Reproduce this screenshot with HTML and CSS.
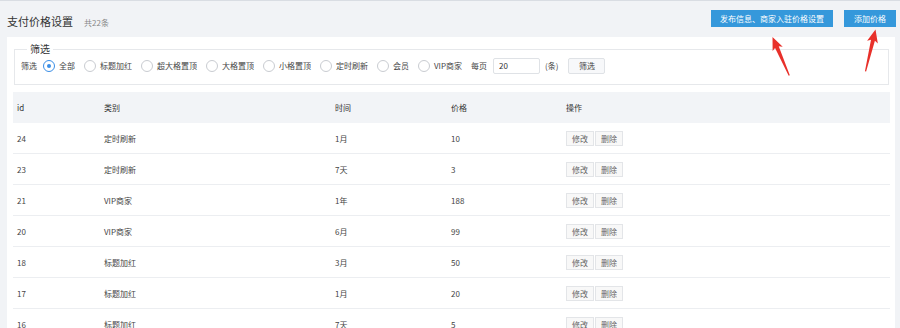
FILE: index.html
```html
<!DOCTYPE html>
<html>
<head>
  <meta charset="utf-8">
  <title>支付价格设置</title>
  <link rel="stylesheet" href="styles.css">
</head>
<body>
  <div class="topbar">
    <div class="title">
      <h1>支付价格设置</h1>
      <span class="count">共22条</span>
    </div>
    <div class="actions">
      <button class="btn-blue">发布信息、商家入驻价格设置</button>
      <button class="btn-blue">添加价格</button>
    </div>
  </div>

  <div class="panel">
    <fieldset class="filter">
      <legend>筛选</legend>
      <div class="filter-row">
        <span class="lbl">筛选</span>
        <label class="radio checked"><i></i>全部</label>
        <label class="radio"><i></i>标题加红</label>
        <label class="radio"><i></i>超大格置顶</label>
        <label class="radio"><i></i>大格置顶</label>
        <label class="radio"><i></i>小格置顶</label>
        <label class="radio"><i></i>定时刷新</label>
        <label class="radio"><i></i>会员</label>
        <label class="radio"><i></i>VIP商家</label>
        <span class="lbl per">每页</span>
        <input type="text" class="per-input" value="20">
        <span class="lbl">(条)</span>
        <button class="btn-gray">筛选</button>
      </div>
    </fieldset>

    <table class="list">
      <thead>
        <tr><th class="c-id">id</th><th class="c-type">类别</th><th class="c-time">时间</th><th class="c-price">价格</th><th>操作</th></tr>
      </thead>
      <tbody>
        <tr><td>24</td><td>定时刷新</td><td>1月</td><td>10</td><td><button class="op">修改</button><button class="op">删除</button></td></tr>
        <tr><td>23</td><td>定时刷新</td><td>7天</td><td>3</td><td><button class="op">修改</button><button class="op">删除</button></td></tr>
        <tr><td>21</td><td>VIP商家</td><td>1年</td><td>188</td><td><button class="op">修改</button><button class="op">删除</button></td></tr>
        <tr><td>20</td><td>VIP商家</td><td>6月</td><td>99</td><td><button class="op">修改</button><button class="op">删除</button></td></tr>
        <tr><td>18</td><td>标题加红</td><td>3月</td><td>50</td><td><button class="op">修改</button><button class="op">删除</button></td></tr>
        <tr><td>17</td><td>标题加红</td><td>1月</td><td>20</td><td><button class="op">修改</button><button class="op">删除</button></td></tr>
        <tr><td>16</td><td>标题加红</td><td>7天</td><td>5</td><td><button class="op">修改</button><button class="op">删除</button></td></tr>
      </tbody>
    </table>
  </div>

  <!-- annotation arrows drawn over the page -->
  <svg class="arrows" width="900" height="328" viewBox="0 0 900 328">
    <g transform="translate(772.5 37) rotate(-23.5)" fill="#e8302a">
      <polygon points="0,0 5.5,13 2,11 0.6,42 -0.6,42 -2,11 -5.5,13"/>
    </g>
    <g transform="translate(875.5 29.5) rotate(13.4)" fill="#e8302a">
      <polygon points="0,0 5.5,13 2,11 0.6,43 -0.6,43 -2,11 -5.5,13"/>
    </g>
  </svg>
</body>
</html>
```

FILE: styles.css
```css
body {
  margin: 0;
  background-color: #f1f3f6;
  border-top: 1px solid #d9dde3;
  font-family: "Noto Sans CJK SC", "Noto Sans", sans-serif;
  color: #333;
  height: 327px;
  overflow: hidden;
}

.topbar {
  display: flex;
  justify-content: space-between;
  align-items: flex-start;
  height: 36px;
  padding-left: 7px;
}

.title {
  display: flex;
  align-items: baseline;
  padding-top: 12px;
}

h1 {
  margin: 0;
  font-size: 11px;
  font-weight: normal;
  line-height: 16px;
  color: #333;
}

.count {
  margin-left: 11px;
  font-size: 8px;
  color: #888;
}

.actions {
  display: flex;
  gap: 11px;
  padding-top: 9px;
  padding-right: 4px;
}

.btn-blue {
  height: 17px;
  padding: 0 10px;
  border: none;
  background-color: #3598db;
  color: #fff;
  font-family: inherit;
  font-size: 8px;
  line-height: 17px;
}

.btn-blue:first-child {
  width: 122px;
  padding: 0;
}

.btn-blue:last-child {
  width: 52px;
  padding: 0;
}

.panel {
  background-color: #fff;
  margin: 0 5px 0 7px;
  padding: 6px 5px 0 6px;
  height: 300px;
}

.filter {
  margin: 0 1px;
  padding: 2px 6px 10px 6px;
  border: 1px solid #e6e8eb;
}

.filter legend {
  margin-left: 6px;
  padding: 0 3px;
  font-size: 10px;
  line-height: 12px;
  color: #333;
}

.filter-row {
  display: flex;
  align-items: center;
  height: 17px;
  font-size: 8px;
  color: #444;
}

.lbl {
  margin-right: 6px;
}

.radio {
  display: flex;
  align-items: center;
  margin-right: 9px;
}

.radio i {
  display: inline-block;
  box-sizing: border-box;
  width: 12px;
  height: 12px;
  border: 1px solid #c9ccd1;
  border-radius: 50%;
  margin-right: 4px;
  position: relative;
}

.radio.checked i {
  border-color: #3a8ee6;
}

.radio.checked i::after {
  content: "";
  position: absolute;
  left: 3px;
  top: 3px;
  width: 4px;
  height: 4px;
  border-radius: 50%;
  background-color: #3a8ee6;
}

.per-input {
  box-sizing: border-box;
  width: 47px;
  height: 16px;
  margin: 0 5px 0 0;
  padding: 0 5px;
  border: 1px solid #dfe2e6;
  border-radius: 2px;
  font-family: inherit;
  font-size: 8px;
  color: #333;
}

.btn-gray {
  box-sizing: border-box;
  width: 37px;
  height: 16px;
  margin-left: 4px;
  padding: 0;
  border: 1px solid #dfe2e6;
  border-radius: 2px;
  background-color: #f7f8fa;
  font-family: inherit;
  font-size: 8px;
  color: #444;
}

.list {
  width: 100%;
  margin: 7px 0 0 0;
  border-collapse: collapse;
  font-size: 8px;
}

.list th {
  height: 31px;
  padding: 0 4px;
  background-color: #f2f4f7;
  text-align: left;
  font-weight: normal;
  color: #333;
}

.list td {
  height: 30px;
  padding: 0 4px;
  border-bottom: 1px solid #eceef1;
  color: #444;
}

.c-id { width: 79px; }
.c-type { width: 223px; }
.c-time { width: 108px; }
.c-price { width: 107px; }

.op {
  box-sizing: border-box;
  height: 15px;
  width: 28px;
  margin-right: 1px;
  padding: 0;
  border: 1px solid #e3e5e8;
  background-color: #f8f8f8;
  font-family: inherit;
  font-size: 8px;
  color: #666;
  vertical-align: middle;
}

.arrows {
  position: absolute;
  left: 0;
  top: 0;
  pointer-events: none;
}
```
